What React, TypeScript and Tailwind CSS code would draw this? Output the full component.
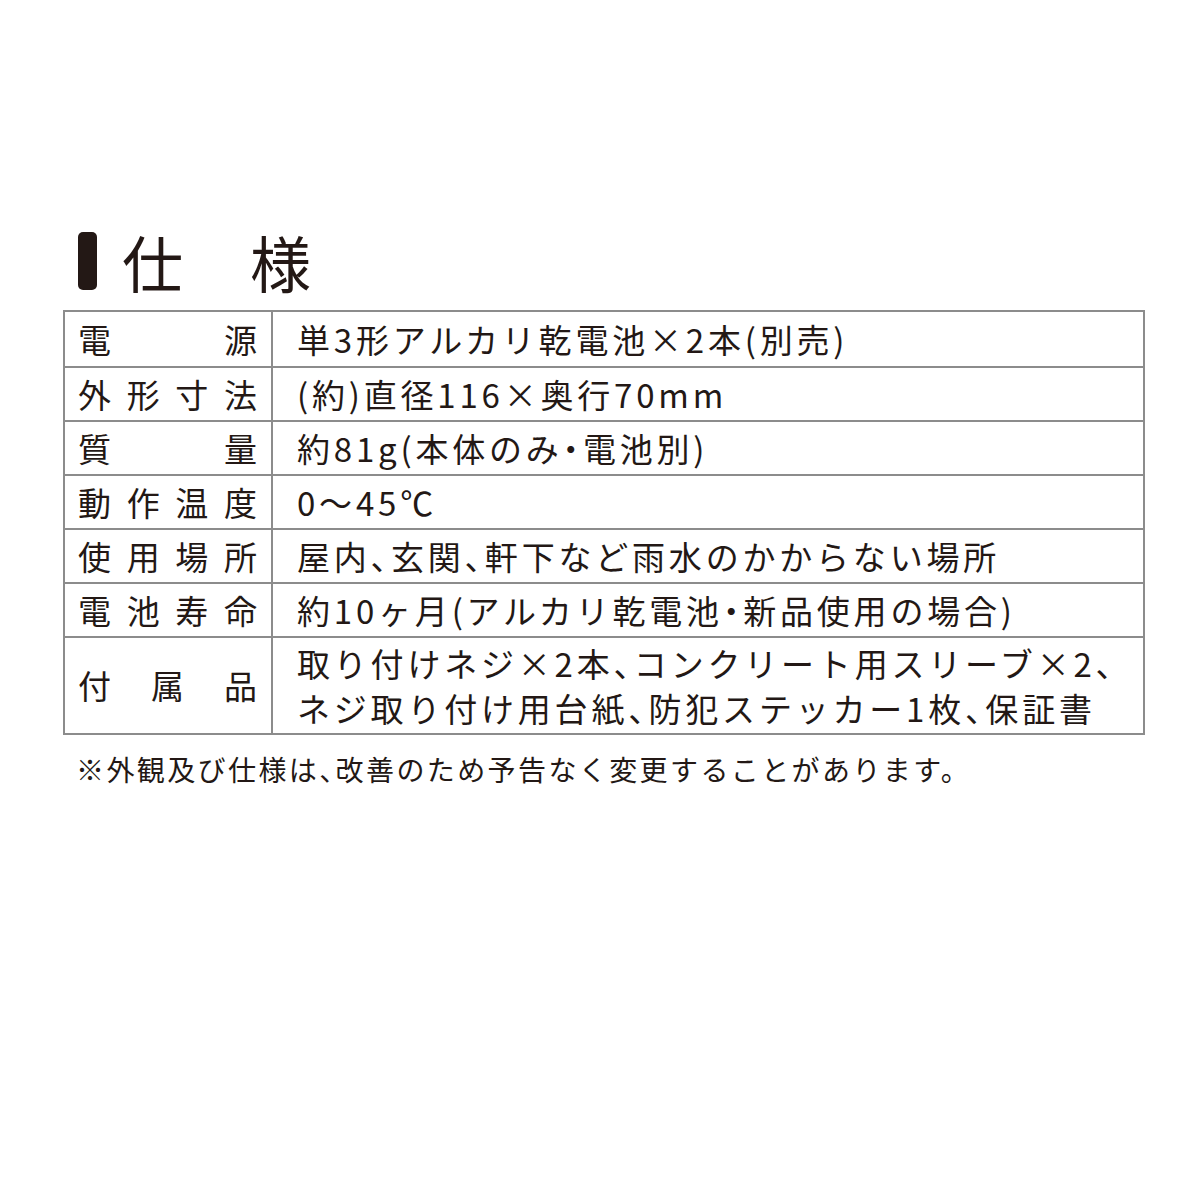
import React from "react";

const rows: { label: string[]; value: string[] }[] = [
  { label: ["電", "源"], value: ["単3形アルカリ乾電池×2本(別売)"] },
  { label: ["外", "形", "寸", "法"], value: ["(約)直径116×奥行70mm"] },
  { label: ["質", "量"], value: ["約81g(本体のみ・電池別)"] },
  { label: ["動", "作", "温", "度"], value: ["0〜45℃"] },
  { label: ["使", "用", "場", "所"], value: ["屋内、玄関、軒下など雨水のかからない場所"] },
  { label: ["電", "池", "寿", "命"], value: ["約10ヶ月(アルカリ乾電池・新品使用の場合)"] },
  {
    label: ["付", "属", "品"],
    value: ["取り付けネジ×2本、コンクリート用スリーブ×2、", "ネジ取り付け用台紙、防犯ステッカー1枚、保証書"],
  },
];

function Txt({ s }: { s: string }) {
  const parts = s.split(/([、・])/);
  return (
    <>
      {parts.map((p, i) =>
        p === "、" || p === "・" ? (
          <span key={i} className="[font-feature-settings:'halt']">
            {p}
          </span>
        ) : (
          <React.Fragment key={i}>{p}</React.Fragment>
        )
      )}
    </>
  );
}

export default function App() {
  return (
    <div
      className="w-[1201px] h-[1201px] bg-white text-[#231815] font-normal"
      style={{ fontFamily: '"Noto Sans CJK JP", "Noto Sans", sans-serif' }}
    >
      <div className="pl-[63px] pt-[226px]">
        <div className="flex items-center h-[70px] pl-[15px]">
          <div className="w-[19px] h-[58px] rounded-[5px] bg-[#231815]" />
          <div className="ml-[25px] text-[61px] leading-none tracking-[3px]">仕　様</div>
        </div>
        <div className="mt-[14px] w-[1082px] border-2 border-[#8c8c8c]">
          {rows.map((r, i) => (
            <div
              key={i}
              className={
                "flex " +
                (i > 0 ? "border-t-2 border-[#8c8c8c] " : "") +
                (r.value.length > 1 ? "h-[97px]" : "h-[54px]")
              }
            >
              <div className="w-[208px] shrink-0 border-r-2 border-[#8c8c8c] flex items-center justify-between pl-[13px] pr-[14px] text-[33px] leading-none">
                {r.label.map((c, j) => (
                  <span key={j}>{c}</span>
                ))}
              </div>
              <div className="flex flex-col justify-center pl-[24px] text-[33px] leading-[45px] tracking-[3.8px] whitespace-nowrap">
                {r.value.map((v, j) => (
                  <div key={j}>
                    <Txt s={v} />
                  </div>
                ))}
              </div>
            </div>
          ))}
        </div>
        <div className="mt-[20px] pl-[13px] text-[28px] leading-none tracking-[2.4px] whitespace-nowrap">
          <Txt s="※外観及び仕様は、改善のため予告なく変更することがあります。" />
        </div>
      </div>
    </div>
  );
}
